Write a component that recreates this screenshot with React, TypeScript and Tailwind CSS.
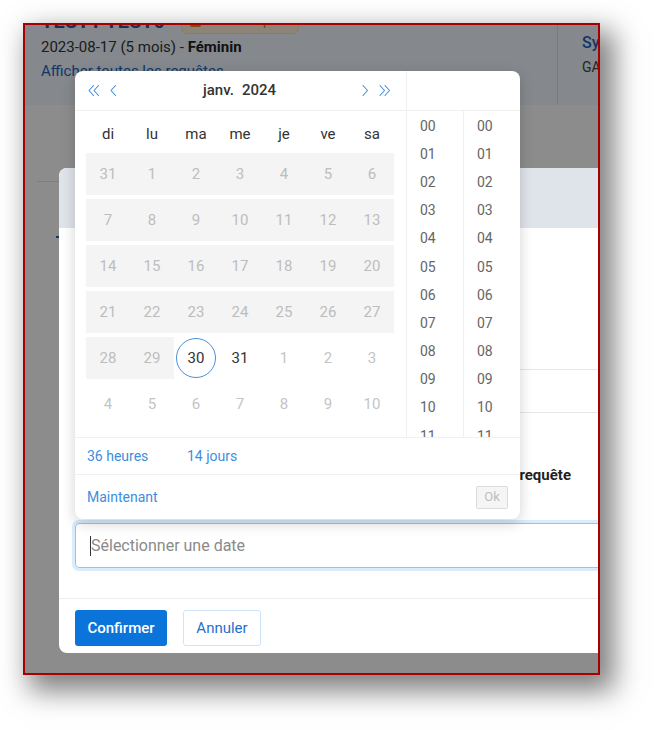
import { ReactNode } from "react";

const weekDays = ["di", "lu", "ma", "me", "je", "ve", "sa"];

// each cell: [label, kind] ; kind: "off" = disabled (grey bg), "next" = other month, "cur" = normal, "sel" = selected
type Cell = [string, "off" | "next" | "cur" | "sel"];

const rows: Cell[][] = [
  [["31", "off"], ["1", "off"], ["2", "off"], ["3", "off"], ["4", "off"], ["5", "off"], ["6", "off"]],
  [["7", "off"], ["8", "off"], ["9", "off"], ["10", "off"], ["11", "off"], ["12", "off"], ["13", "off"]],
  [["14", "off"], ["15", "off"], ["16", "off"], ["17", "off"], ["18", "off"], ["19", "off"], ["20", "off"]],
  [["21", "off"], ["22", "off"], ["23", "off"], ["24", "off"], ["25", "off"], ["26", "off"], ["27", "off"]],
  [["28", "off"], ["29", "off"], ["30", "sel"], ["31", "cur"], ["1", "next"], ["2", "next"], ["3", "next"]],
  [["4", "next"], ["5", "next"], ["6", "next"], ["7", "next"], ["8", "next"], ["9", "next"], ["10", "next"]],
];

const hours = ["00", "01", "02", "03", "04", "05", "06", "07", "08", "09", "10", "11", "12"];

function Chevron({ dir, double }: { dir: "l" | "r"; double?: boolean }) {
  const single = dir === "l" ? "M6.5 1.5 L2 6.5 L6.5 11.5" : "M2 1.5 L6.5 6.5 L2 11.5";
  const second = dir === "l" ? "M11.5 1.5 L7 6.5 L11.5 11.5" : "M7 1.5 L11.5 6.5 L7 11.5";
  return (
    <svg width={double ? 14 : 9} height="13" viewBox={double ? "0 0 14 13" : "0 0 9 13"} fill="none" stroke="#3f8de0" strokeWidth="1.1" strokeLinecap="round" strokeLinejoin="round">
      <path d={single} />
      {double && <path d={second} />}
    </svg>
  );
}

function DayCell({ cell }: { cell: Cell }) {
  const [label, kind] = cell;
  if (kind === "sel") {
    return (
      <div className="w-[44px] h-[42px] flex items-center justify-center">
        <div className="w-[40px] h-[40px] rounded-full border border-[#4a8fd8] flex items-center justify-center text-[#333]">
          {label}
        </div>
      </div>
    );
  }
  const cls =
    kind === "off"
      ? "bg-[#f4f4f4] text-[#bdbdbd]"
      : kind === "next"
      ? "text-[#c4c4c4]"
      : "text-[#333]";
  return <div className={`w-[44px] h-[42px] flex items-center justify-center ${cls}`}>{label}</div>;
}

function TimeColumn({ border }: { border?: boolean }) {
  return (
    <div className={`w-[56px] h-full overflow-hidden pt-px ${border ? "border-l border-[#f0f0f0]" : ""}`}>
      {hours.map((h) => (
        <div key={h} className="h-[28.2px] flex items-center pl-[13px] text-[#666] text-[14px]">
          {h}
        </div>
      ))}
    </div>
  );
}

function Row({ children, className }: { children: ReactNode; className?: string }) {
  return <div className={`flex ${className ?? ""}`}>{children}</div>;
}

export default function App() {
  return (
    <div className="w-[654px] h-[730px] bg-white pt-[23px] pl-[23px] font-['Roboto',sans-serif] overflow-hidden">
      <div className="relative w-[577px] h-[652px] border-2 border-[#a80000] overflow-hidden bg-white shadow-[10px_12px_26px_4px_rgba(0,0,0,0.5)]">
        {/* page under the modal */}
        <div className="flex h-[80px] bg-[#f2f8ff]">
          <div className="w-[532px] shrink-0 pl-4 -mt-[18px] flex flex-col">
            <div className="h-[28px] flex items-center gap-4">
              <span className="text-[20px] font-bold text-[#1a5fa8]">TEST1 TEST0</span>
              <span className="h-[26px] px-2 flex items-center gap-1.5 rounded-md bg-[#fff2d9] border border-[#ffe2a8] text-[#d77a12] text-[13px]">
                <span className="w-[11px] h-[11px] border-2 border-[#e48a18] rounded-[2px]" />
                Action requise
              </span>
            </div>
            <div className="h-[24px] flex items-center text-[15px] text-[#333]">
              2023-08-17 (5 mois) -&nbsp;<span className="font-bold text-[#222]">Féminin</span>
            </div>
            <div className="h-[24px] flex items-center text-[15px] text-[#1c67bf]">Afficher toutes les requêtes</div>
          </div>
          <div className="flex-1 border-l border-[#d8e2ec] pl-6 pt-[6px] whitespace-nowrap">
            <div className="text-[16px] font-medium text-[#1c67bf] leading-6">Symptômes</div>
            <div className="text-[14px] text-[#444] leading-6">GASTRO</div>
          </div>
        </div>
        <div className="ml-[12px] mt-[76px] w-[100px] h-px bg-[#e3e3e3]" />
        <div className="ml-[31px] mt-[54px] w-[3px] h-[2px] bg-[#1c67bf]" />

        {/* dimmed backdrop */}
        <div className="absolute inset-0 bg-black/45" />

        {/* modal */}
        <div className="absolute left-[34px] top-[143px] w-[600px] h-[485px] bg-white rounded-lg overflow-hidden flex flex-col">
          <div className="h-[60px] bg-[#dfe3ea] shrink-0" />
          <div className="px-4 flex flex-col flex-1">
            <div className="h-[142px] border-b border-[#e6e6e6] shrink-0" />
            <div className="h-[43px] border-b border-[#e6e6e6] shrink-0" />
            <div className="mt-[51px] w-[496px] h-[22px] flex items-center justify-end text-[15px] font-bold text-[#1f1f1f]">
              Date de la requête
            </div>
            <div className="mt-[37px] w-[560px] h-[45px] rounded border border-[#8fc6f3] ring-[3px] ring-[#d9ecfc] flex items-center pl-[14px] text-[16px] text-[#8a8a8a]">
              <span className="w-px h-[20px] bg-[#333]" />
              Sélectionner une date
            </div>
          </div>
          <div className="h-[55px] shrink-0 border-t border-[#eeeeee] px-4 pt-[11px] flex gap-4 items-start">
            <button className="h-[36px] w-[92px] rounded-[3px] bg-[#0a74da] text-white text-[15px] font-medium">Confirmer</button>
            <button className="h-[36px] w-[78px] rounded-[3px] border border-[#cfe5fb] bg-white text-[#1f6fcf] text-[15px]">Annuler</button>
          </div>
        </div>

        {/* date picker popup */}
        <div className="absolute left-[50px] top-[46px] w-[445px] h-[448px] bg-white rounded-lg shadow-[0_4px_14px_rgba(0,0,0,0.18)] flex flex-col overflow-hidden text-[14px]">
          <Row className="h-[366px]">
            <div className="w-[332px] border-r border-[#f0f0f0] flex flex-col">
              <div className="h-[40px] border-b border-[#f0f0f0] flex items-center px-3">
                <div className="flex items-center gap-[8px]">
                  <Chevron dir="l" double />
                  <Chevron dir="l" />
                </div>
                <div className="flex-1 flex justify-center gap-2 text-[15px] font-medium text-[#333]">
                  <span>janv.</span>
                  <span>2024</span>
                </div>
                <div className="flex items-center gap-[8px] pr-[2px]">
                  <Chevron dir="r" />
                  <Chevron dir="r" double />
                </div>
              </div>
              <div className="pl-[11px] pt-2 flex flex-col">
                <Row className="h-[30px]">
                  {weekDays.map((d) => (
                    <div key={d} className="w-[44px] flex items-center justify-center text-[15px] text-[#333]">
                      {d}
                    </div>
                  ))}
                </Row>
                <div className="mt-1 flex flex-col gap-1 text-[15px]">
                  {rows.map((r, i) => (
                    <Row key={i}>
                      {r.map((c, j) => (
                        <DayCell key={j} cell={c} />
                      ))}
                    </Row>
                  ))}
                </div>
              </div>
            </div>
            <div className="flex-1 flex flex-col">
              <div className="h-[40px] border-b border-[#f0f0f0] shrink-0" />
              <div className="flex flex-1 overflow-hidden">
                <TimeColumn />
                <TimeColumn border />
              </div>
            </div>
          </Row>
          <div className="h-[37px] border-t border-[#f0f0f0] flex items-center px-3 text-[#3d8ee0]">
            <span className="w-[100px]">36 heures</span>
            <span>14 jours</span>
          </div>
          <div className="h-[45px] border-t border-[#f0f0f0] flex items-center justify-between px-3">
            <span className="text-[#3d8ee0]">Maintenant</span>
            <span className="w-[32px] h-[23px] border border-[#dcdcdc] bg-[#f5f5f5] rounded-[2px] text-[#bdbdbd] text-[13px] flex items-center justify-center">
              Ok
            </span>
          </div>
        </div>
      </div>
    </div>
  );
}
